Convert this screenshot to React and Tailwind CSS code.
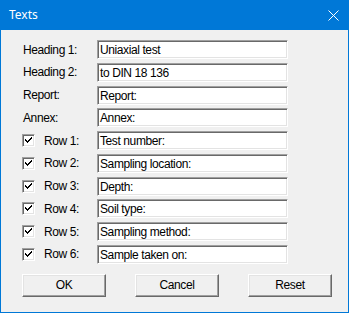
import React from "react";

const rows = [
  { label: "Heading 1:", value: "Uniaxial test" },
  { label: "Heading 2:", value: "to DIN 18 136" },
  { label: "Report:", value: "Report:" },
  { label: "Annex:", value: "Annex:" },
  { label: "Row 1:", value: "Test number:", check: true },
  { label: "Row 2:", value: "Sampling location:", check: true },
  { label: "Row 3:", value: "Depth:", check: true },
  { label: "Row 4:", value: "Soil type:", check: true },
  { label: "Row 5:", value: "Sampling method:", check: true },
  { label: "Row 6:", value: "Sample taken on:", check: true },
];

function CheckBox() {
  return (
    <div className="w-[13px] h-[13px] shrink-0 bg-white border border-t-[#a0a0a0] border-l-[#a0a0a0] border-r-white border-b-white shadow-[inset_1px_1px_0_#696969,inset_-1px_-1px_0_#e3e3e3] flex items-center justify-center">
      <svg width="7" height="7" viewBox="0 0 7 7">
        <path d="M0 2h1v1h1v1h1V3h1V2h1V1h1V0h1v2H6v1H5v1H4v1H3v1H2V5H1V4H0z" fill="#000" />
      </svg>
    </div>
  );
}

function Button({ children }) {
  return (
    <button className="w-[84px] h-[23px] bg-[#f0f0f0] border border-t-white border-l-white border-r-[#696969] border-b-[#696969] shadow-[inset_-1px_-1px_0_#a0a0a0,inset_1px_1px_0_#e3e3e3] text-[12px] tracking-[-0.4px] text-black flex items-center justify-center">
      {children}
    </button>
  );
}

export default function App() {
  return (
    <div
      className="w-[349px] h-[313px] bg-[#f0f0f0] border-x border-b border-[#0078d7] flex flex-col"
      style={{ fontFamily: '"Liberation Sans", Arial, sans-serif' }}
    >
      {/* title bar */}
      <div className="h-[30px] bg-[#0078d7] flex items-center justify-between pl-[8px] pr-[9px] shrink-0">
        <span className="text-white text-[12px]" style={{ fontFamily: '"Noto Sans", sans-serif' }}>
          Texts
        </span>
        <svg width="11" height="11" viewBox="0 0 11 11">
          <path d="M0.5 0.5L10.5 10.5M10.5 0.5L0.5 10.5" stroke="#fff" strokeWidth="1" />
        </svg>
      </div>

      <div className="pl-[21px] pt-[10px] flex flex-col gap-[3.75px]">
        {rows.map((r) => (
          <div key={r.label} className="flex items-center h-[19px]">
            <div className="w-[75px] flex items-center text-[12px] tracking-[-0.4px] text-black">
              {r.check ? (
                <>
                  <CheckBox />
                  <span className="ml-[9px]">{r.label}</span>
                </>
              ) : (
                <span className="ml-[1px]">{r.label}</span>
              )}
            </div>
            <div className="w-[191px] h-[19px] bg-white border border-t-[#a0a0a0] border-l-[#a0a0a0] border-r-white border-b-white shadow-[inset_1px_1px_0_#696969,inset_-1px_-1px_0_#e3e3e3] pl-[2px] pt-[1px] flex items-center text-[12px] tracking-[-0.4px] text-black">
              {r.value}
            </div>
          </div>
        ))}
      </div>

      <div className="flex pl-[21px] mt-[10px] gap-[29px]">
        <Button>OK</Button>
        <Button>Cancel</Button>
        <Button>Reset</Button>
      </div>
    </div>
  );
}
